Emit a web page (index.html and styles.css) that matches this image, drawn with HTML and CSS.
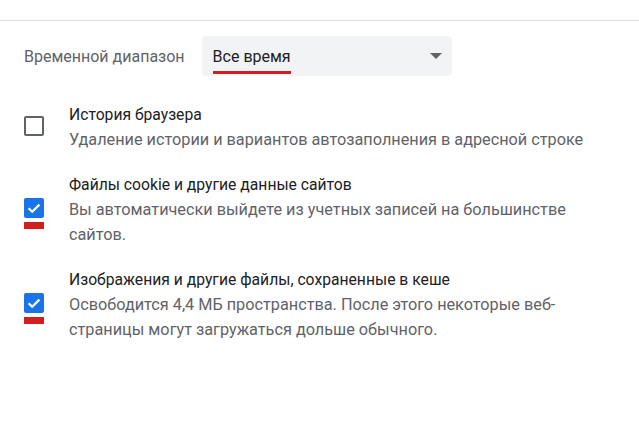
FILE: index.html
```html
<!DOCTYPE html>
<html lang="ru">
<head>
  <meta charset="UTF-8" />
  <meta name="viewport" content="width=device-width, initial-scale=1.0" />
  <title>Очистить историю</title>
  <link rel="stylesheet" href="styles.css">
</head>
<body>
  <div class="tabs">
    <div class="tabs-inner">
      <span class="tab tab-active">Основные настройки</span>
      <span class="tab">Дополнительные</span>
    </div>
  </div>

  <div class="range">
    <span class="range-label">Временной диапазон</span>
    <div class="select">
      <span class="select-value">Все время<span class="mark-line"></span></span>
      <span class="select-arrow"></span>
    </div>
  </div>

  <div class="item">
    <div class="box"></div>
    <div class="item-text">
      <div class="item-title">История браузера</div>
      <div class="item-sub">Удаление истории и вариантов автозаполнения в адресной строке</div>
    </div>
  </div>

  <div class="item">
    <div class="box checked">
      <svg viewBox="0 0 20 20" width="20" height="20"><path d="M4.6 10.2l3.6 3.6 7.2-7.2" fill="none" stroke="#fff" stroke-width="2.2"/></svg>
      <span class="mark-bar"></span>
    </div>
    <div class="item-text">
      <div class="item-title">Файлы cookie и другие данные сайтов</div>
      <div class="item-sub">Вы автоматически выйдете из учетных записей на большинстве сайтов.</div>
    </div>
  </div>

  <div class="item">
    <div class="box checked">
      <svg viewBox="0 0 20 20" width="20" height="20"><path d="M4.6 10.2l3.6 3.6 7.2-7.2" fill="none" stroke="#fff" stroke-width="2.2"/></svg>
      <span class="mark-bar"></span>
    </div>
    <div class="item-text">
      <div class="item-title">Изображения и другие файлы, сохраненные в кеше</div>
      <div class="item-sub">Освободится 4,4 МБ пространства. После этого некоторые веб-страницы могут загружаться дольше обычного.</div>
    </div>
  </div>
</body>
</html>
```

FILE: styles.css
```css
body {
  margin: 0;
  font-family: Roboto, "Noto Sans", sans-serif;
  font-size: 16px;
  line-height: 25px;
  background-color: #fff;
  color: #202124;
}
.tabs {
  height: 20px;
  overflow: hidden;
  border-bottom: 1px solid #e0e0e0;
}
.tabs-inner {
  display: flex;
  margin-top: -22px;
  padding-left: 66px;
}
.tab {
  color: #5f6368;
  line-height: 25px;
}
.tab-active {
  color: #1a73e8;
  width: 277px;
}
.range {
  display: flex;
  align-items: center;
  gap: 17px;
  margin-top: 15px;
  padding-left: 24px;
}
.range-label {
  color: #5f6368;
}
.select {
  display: flex;
  align-items: center;
  justify-content: space-between;
  width: 250px;
  height: 40px;
  box-sizing: border-box;
  padding: 0 10px 0 11px;
  background-color: #f1f3f4;
  border-radius: 4px;
}
.select-value {
  position: relative;
}
.mark-line {
  position: absolute;
  left: 0;
  right: 0;
  top: calc(100% + 2px);
  height: 3px;
  background-color: #d11f1f;
}
.select-arrow {
  width: 0;
  height: 0;
  border-left: 6px solid transparent;
  border-right: 6px solid transparent;
  border-top: 6px solid #5f6368;
  margin-bottom: 1px;
}
.item {
  display: flex;
  align-items: center;
  gap: 25px;
  padding-left: 24px;
  margin-top: 20px;
}
.range + .item {
  margin-top: 26px;
}
.box {
  position: relative;
  flex: none;
  width: 20px;
  height: 20px;
  box-sizing: border-box;
  border: 2px solid #5f6368;
  border-radius: 2px;
  margin-top: -3px;
}
.box.checked {
  border: none;
  background-color: #1a73e8;
}
.box svg {
  display: block;
}
.mark-bar {
  position: absolute;
  left: 0;
  top: 24px;
  width: 20px;
  height: 7px;
  background-color: #d11f1f;
}
.item-text {
  width: 520px;
}
.item-title {
  font-size: 15.7px;
}
.item-sub {
  font-size: 16.25px;
  color: #5f6368;
}
```
